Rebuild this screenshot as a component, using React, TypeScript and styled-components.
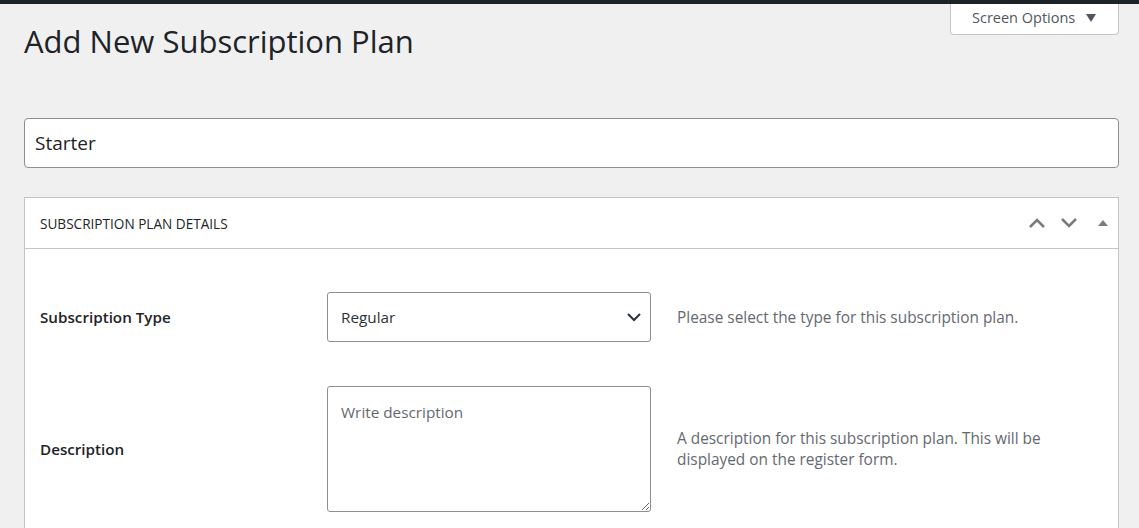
import React from 'react'
import styled, { createGlobalStyle } from 'styled-components'

const GlobalStyle = createGlobalStyle`
  html, body {
    margin: 0;
    padding: 0;
    background: #f0f0f1;
    font-family: "Open Sans", "Noto Sans", sans-serif;
    color: #1d2327;
  }
  * { box-sizing: border-box; }
`

const AdminBar = styled.div`
  height: 4px;
  background: #1d2327;
`

const Wrap = styled.div`
  padding: 0 20px 0 24px;
`

const TopRow = styled.div`
  display: flex;
  justify-content: space-between;
  align-items: flex-start;
`

const Title = styled.h1`
  margin: 19px 0 0;
  font-size: 31px;
  font-weight: 400;
  line-height: 1.2;
  color: #1d2327;
`

const ScreenOptions = styled.button`
  display: flex;
  align-items: center;
  gap: 11px;
  width: 169px;
  height: 31px;
  padding: 0 18px 3px 21px;
  background: #fff;
  border: 1px solid #c3c4c7;
  border-top: none;
  border-radius: 0 0 4px 4px;
  font-family: inherit;
  font-size: 14.5px;
  white-space: nowrap;
  color: #50575e;
`

const Caret = styled.span`
  width: 0;
  height: 0;
  border-left: 5px solid transparent;
  border-right: 5px solid transparent;
  border-top: 8px solid #50575e;
`

const TitleInput = styled.input`
  display: block;
  width: 100%;
  height: 50px;
  margin-top: 58px;
  padding: 0 10px;
  border: 1px solid #8c8f94;
  border-radius: 4px;
  background: #fff;
  font-family: inherit;
  font-size: 19px;
  color: #1d2327;
  outline: none;
`

const Postbox = styled.div`
  margin-top: 29px;
  background: #fff;
  border: 1px solid #c3c4c7;
`

const PostboxHeader = styled.div`
  display: flex;
  align-items: center;
  justify-content: space-between;
  height: 51px;
  padding: 0 9px 0 15px;
  border-bottom: 1px solid #c3c4c7;
`

const PostboxTitle = styled.h2`
  margin: 0;
  font-size: 13.6px;
  font-weight: 400;
  text-transform: uppercase;
  color: #1d2327;
`

const Handles = styled.div`
  display: flex;
  align-items: center;
  gap: 14px;
`

const HandleIcon = styled.svg<{ $push?: number }>`
  display: block;
  margin-left: ${p => p.$push ?? 0}px;
`

const Fields = styled.div`
  display: grid;
  grid-template-columns: 261px 324px 1fr;
  column-gap: 26px;
  row-gap: 44px;
  align-items: center;
  padding: 43px 0 20px 15px;
`

const Label = styled.label`
  font-size: 15.2px;
  font-weight: 600;
  color: #1d2327;
`

const SelectBox = styled.div`
  display: flex;
  align-items: center;
  justify-content: space-between;
  height: 50px;
  padding: 0 8px 0 13px;
  border: 1px solid #8c8f94;
  border-radius: 3px;
  font-size: 15.3px;
  color: #2c3338;
`

const TextArea = styled.textarea`
  display: block;
  width: 100%;
  height: 126px;
  padding: 15px 13px;
  border: 1px solid #8c8f94;
  border-radius: 3px;
  font-family: inherit;
  font-size: 15.3px;
  color: #2c3338;
  outline: none;
  &::placeholder { color: #646970; }
`

const Help = styled.p`
  margin: 0;
  max-width: 380px;
  font-size: 15.4px;
  line-height: 21px;
  color: #646970;
`

function Chevron({ dir }: { dir: 'up' | 'down' }) {
  return (
    <HandleIcon width="18" height="12" viewBox="0 0 18 12">
      <polyline
        points={dir === 'up' ? '2,10 9,3 16,10' : '2,2 9,9 16,2'}
        fill="none"
        stroke="#787c82"
        strokeWidth="2.6"
      />
    </HandleIcon>
  )
}

export default function App() {
  return (
    <>
      <GlobalStyle />
      <AdminBar />
      <Wrap>
        <TopRow>
          <Title>Add New Subscription Plan</Title>
          <ScreenOptions>
            Screen Options <Caret />
          </ScreenOptions>
        </TopRow>
        <TitleInput defaultValue="Starter" />
        <Postbox>
          <PostboxHeader>
            <PostboxTitle>Subscription Plan Details</PostboxTitle>
            <Handles>
              <Chevron dir="up" />
              <Chevron dir="down" />
              <HandleIcon $push={5} width="12" height="10" viewBox="0 0 12 10">
                <polygon points="1,8 6,2 11,8" fill="#787c82" />
              </HandleIcon>
            </Handles>
          </PostboxHeader>
          <Fields>
            <Label>Subscription Type</Label>
            <SelectBox>
              Regular
              <svg width="16" height="10" viewBox="0 0 16 10">
                <polyline points="2,2 8,8 14,2" fill="none" stroke="#2c3338" strokeWidth="2" />
              </svg>
            </SelectBox>
            <Help>Please select the type for this subscription plan.</Help>

            <Label>Description</Label>
            <TextArea placeholder="Write description" />
            <Help>
              A description for this subscription plan. This will be displayed on the register form.
            </Help>
          </Fields>
        </Postbox>
      </Wrap>
    </>
  )
}
